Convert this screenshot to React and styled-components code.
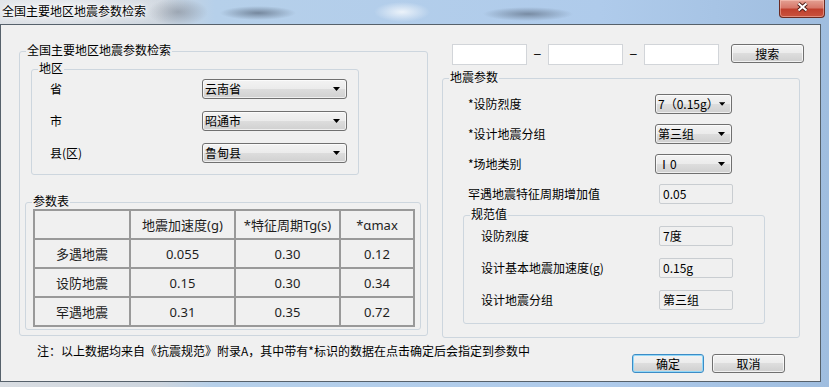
import React from 'react';
import styled, { createGlobalStyle } from 'styled-components';

const GlobalStyle = createGlobalStyle`
  html, body {
    margin: 0;
    padding: 0;
  }
  body {
    background: #a9c9ec;
    font-family: "Noto Sans CJK SC", "Noto Sans", sans-serif;
    font-size: 12px;
    color: #000;
  }
  * {
    box-sizing: border-box;
  }
`;

const Window = styled.div`
  width: 829px;
  height: 387px;
  overflow: hidden;
  display: flex;
  flex-direction: column;
  background:
    radial-gradient(ellipse 38px 7px at 258px 13px, rgba(90, 105, 125, 0.7), rgba(90, 105, 125, 0)),
    radial-gradient(ellipse 28px 10px at 402px 12px, rgba(255, 255, 255, 0.75), rgba(255, 255, 255, 0)),
    radial-gradient(ellipse 45px 7px at 528px 14px, rgba(90, 105, 125, 0.65), rgba(90, 105, 125, 0)),
    radial-gradient(ellipse 30px 14px at 178px 12px, rgba(120, 128, 140, 0.55), rgba(120, 128, 140, 0)),
    radial-gradient(ellipse 130px 22px at 60px 8px, rgba(238, 240, 243, 0.95), rgba(238, 240, 243, 0)),
    linear-gradient(90deg, #d9dde2 0px, #cdd5de 160px, #b6d0ea 215px, #afcbeb 600px, #9fbddf 829px);
`;

const TitleBar = styled.div`
  flex: none;
  height: 24px;
  display: flex;
  justify-content: space-between;
  align-items: flex-start;
`;

const Title = styled.div`
  padding: 4px 0 0 2px;
  font-size: 12px;
  line-height: 14px;
  color: #000;
  text-shadow: 0 0 6px #fff, 0 0 3px #fff;
`;

const CloseButton = styled.div`
  width: 46px;
  height: 18px;
  margin-right: 4px;
  border: 1px solid #6a2a22;
  border-top: none;
  border-radius: 0 0 4px 4px;
  background: linear-gradient(#e4a093 0%, #d7786a 45%, #c0402e 55%, #c9523e 100%);
  box-shadow: inset 0 0 0 1px rgba(255, 210, 200, 0.45);
  display: flex;
  justify-content: center;
  align-items: flex-start;
  padding-top: 2px;
`;

const Client = styled.div`
  width: 821px;
  height: 358px;
  margin: 0 8px 5px 0;
  border: 1px solid #56616b;
  background: #f0f0f0;
  display: flex;
  flex-direction: column;
`;

const Body = styled.div`
  display: flex;
  align-items: flex-start;
  padding: 19px 0 0 18px;
`;

const Group = styled.fieldset`
  margin: ${p => p.$mt || 0}px 0 0 ${p => p.$ml || 0}px;
  padding: 0;
  min-width: 0;
  width: ${p => p.$w}px;
  height: ${p => p.$h}px;
  border: 1px solid #cdd6de;
  border-radius: 3px;
`;

const Legend = styled.legend`
  margin-left: 6px;
  padding: 0 1px 2px;
  font-size: 12px;
  line-height: 12px;
`;

const Rows = styled.div`
  display: flex;
  flex-direction: column;
  gap: ${p => p.$gap}px;
  padding: ${p => p.$pt}px 0 0 ${p => p.$pl}px;
`;

const FieldRow = styled.div`
  display: flex;
  align-items: center;
  height: 20px;
`;

const FieldLabel = styled.span`
  flex: none;
  width: ${p => p.$w}px;
  line-height: 14px;
  white-space: nowrap;
`;

const Combo = styled.div`
  width: ${p => p.$w}px;
  height: 20px;
  border: 1px solid #707070;
  border-radius: 3px;
  background: linear-gradient(#f3f3f3 0%, #ebebeb 50%, #dddddd 50%, #d0d0d0 100%);
  box-shadow: inset 0 0 0 1px rgba(255, 255, 255, 0.65);
  display: flex;
  align-items: center;
  justify-content: space-between;
  padding: 0 6px 0 2px;
  line-height: 14px;
  white-space: nowrap;
`;

const ReadBox = styled.div`
  width: 74px;
  height: 20px;
  border: 1px solid #c9cdd1;
  border-radius: 2px;
  background: #f0f0f0;
  padding: 0 3px;
  display: flex;
  align-items: center;
  line-height: 14px;
`;

const TableGroupInner = styled.div`
  padding-left: 7px;
`;

const ParamTable = styled.table`
  width: 380px;
  border-collapse: collapse;
  table-layout: fixed;
  font-family: "Noto Sans", "Noto Sans CJK SC", sans-serif;
  font-size: 13px;
  color: #1e1e1e;
`;

const Cell = styled.td`
  height: 29px;
  padding: 0;
  border: 2px solid #999;
  text-align: center;
`;

const RightColumn = styled.div`
  display: flex;
  flex-direction: column;
  margin-left: 14px;
  width: 362px;
`;

const SearchRow = styled.div`
  display: flex;
  align-items: flex-start;
  padding-left: 10px;
  height: 21px;
`;

const SearchInput = styled.input`
  width: 75px;
  height: 21px;
  border: 1px solid #d2d5d9;
  background: #fff;
  padding: 0 2px;
  font: inherit;
  outline: none;
`;

const Dash = styled.span`
  width: 21px;
  text-align: center;
  line-height: 21px;
  font-family: "Liberation Sans", sans-serif;
`;

const Button = styled.button`
  width: ${p => p.$w}px;
  height: 19px;
  margin-left: ${p => p.$ml || 0}px;
  padding: 0;
  border: 1px solid ${p => (p.$primary ? '#3c8cc6' : '#707070')};
  border-radius: 3px;
  background: linear-gradient(#f3f3f3 0%, #ebebeb 50%, #dddddd 50%, #cfcfcf 100%);
  box-shadow: inset 0 0 0 1px ${p => (p.$primary ? '#92d8f8' : 'rgba(255, 255, 255, 0.7)')};
  font-family: "Noto Sans CJK SC", sans-serif;
  font-size: 12px;
  line-height: 16px;
  color: #000;
`;

const Footer = styled.div`
  display: flex;
  align-items: flex-start;
  margin-top: 6px;
  padding: 0 35px 0 36px;
`;

const Note = styled.div`
  flex: 1;
  line-height: 14px;
  white-space: nowrap;
`;

const ButtonGroup = styled.div`
  display: flex;
  gap: 8px;
  margin-top: 10px;
`;

const Arrow = () => (
  <svg width="7" height="4" viewBox="0 0 7 4">
    <polygon points="0,0 7,0 3.5,4" fill="#000" />
  </svg>
);

const Select = ({ w, children }) => (
  <Combo $w={w}>
    <span>{children}</span>
    <Arrow />
  </Combo>
);

const regionRows = [
  ['省', '云南省'],
  ['市', '昭通市'],
  ['县(区)', '鲁甸县'],
];

const tableRows = [
  ['多遇地震', '0.055', '0.30', '0.12'],
  ['设防地震', '0.15', '0.30', '0.34'],
  ['罕遇地震', '0.31', '0.35', '0.72'],
];

const quakeRows = [
  ['*设防烈度', '7（0.15g）'],
  ['*设计地震分组', '第三组'],
  ['*场地类别', 'Ⅰ0'],
];

const codeRows = [
  ['设防烈度', '7度'],
  ['设计基本地震加速度(g)', '0.15g'],
  ['设计地震分组', '第三组'],
];

export default function App() {
  return (
    <Window>
      <GlobalStyle />
      <TitleBar>
        <Title>全国主要地区地震参数检索</Title>
        <CloseButton>
          <svg width="13" height="10" viewBox="0 0 13 10">
            <path d="M2.5 1.5 L10.5 8.5 M10.5 1.5 L2.5 8.5" stroke="#4a1812" strokeWidth="3.8" />
            <path d="M2.5 1.5 L10.5 8.5 M10.5 1.5 L2.5 8.5" stroke="#fff" strokeWidth="2" />
          </svg>
        </CloseButton>
      </TitleBar>
      <Client>
        <Body>
          <Group $w={409} $h={292}>
            <Legend>全国主要地区地震参数检索</Legend>
            <Group $w={328} $h={113} $ml={11} $mt={4}>
              <Legend>地区</Legend>
              <Rows $gap={12} $pt={3} $pl={18}>
                {regionRows.map(([label, value]) => (
                  <FieldRow key={label}>
                    <FieldLabel $w={152}>{label}</FieldLabel>
                    <Select w={145}>{value}</Select>
                  </FieldRow>
                ))}
              </Rows>
            </Group>
            <Group $w={396} $h={135} $ml={5} $mt={20}>
              <Legend>参数表</Legend>
              <TableGroupInner>
                <ParamTable>
                  <colgroup>
                    <col style={{ width: 96 }} />
                    <col style={{ width: 105 }} />
                    <col style={{ width: 105 }} />
                    <col style={{ width: 74 }} />
                  </colgroup>
                  <tbody>
                    <tr>
                      <Cell />
                      <Cell>地震加速度(g)</Cell>
                      <Cell>*特征周期Tg(s)</Cell>
                      <Cell>*αmax</Cell>
                    </tr>
                    {tableRows.map(row => (
                      <tr key={row[0]}>
                        {row.map((c, i) => (
                          <Cell key={i}>{c}</Cell>
                        ))}
                      </tr>
                    ))}
                  </tbody>
                </ParamTable>
              </TableGroupInner>
            </Group>
          </Group>

          <RightColumn>
            <SearchRow>
              <SearchInput defaultValue="" />
              <Dash>–</Dash>
              <SearchInput defaultValue="" />
              <Dash>–</Dash>
              <SearchInput defaultValue="" />
              <Button $w={74} $ml={12}>搜索</Button>
            </SearchRow>
            <Group $w={358} $h={267} $mt={6}>
              <Legend>地震参数</Legend>
              <Rows $gap={10} $pt={9} $pl={25}>
                {quakeRows.map(([label, value]) => (
                  <FieldRow key={label}>
                    <FieldLabel $w={187}>{label}</FieldLabel>
                    <Select w={77}>{value}</Select>
                  </FieldRow>
                ))}
                <FieldRow>
                  <FieldLabel $w={191}>罕遇地震特征周期增加值</FieldLabel>
                  <ReadBox>0.05</ReadBox>
                </FieldRow>
              </Rows>
              <Group $w={302} $h={116} $ml={20} $mt={4}>
                <Legend>规范值</Legend>
                <Rows $gap={12} $pt={4} $pl={17}>
                  {codeRows.map(([label, value]) => (
                    <FieldRow key={label}>
                      <FieldLabel $w={178}>{label}</FieldLabel>
                      <ReadBox>{value}</ReadBox>
                    </FieldRow>
                  ))}
                </Rows>
              </Group>
            </Group>
          </RightColumn>
        </Body>
        <Footer>
          <Note>注：以上数据均来自《抗震规范》附录A，其中带有*标识的数据在点击确定后会指定到参数中</Note>
          <ButtonGroup>
            <Button $w={72} $primary>确定</Button>
            <Button $w={73}>取消</Button>
          </ButtonGroup>
        </Footer>
      </Client>
    </Window>
  );
}
